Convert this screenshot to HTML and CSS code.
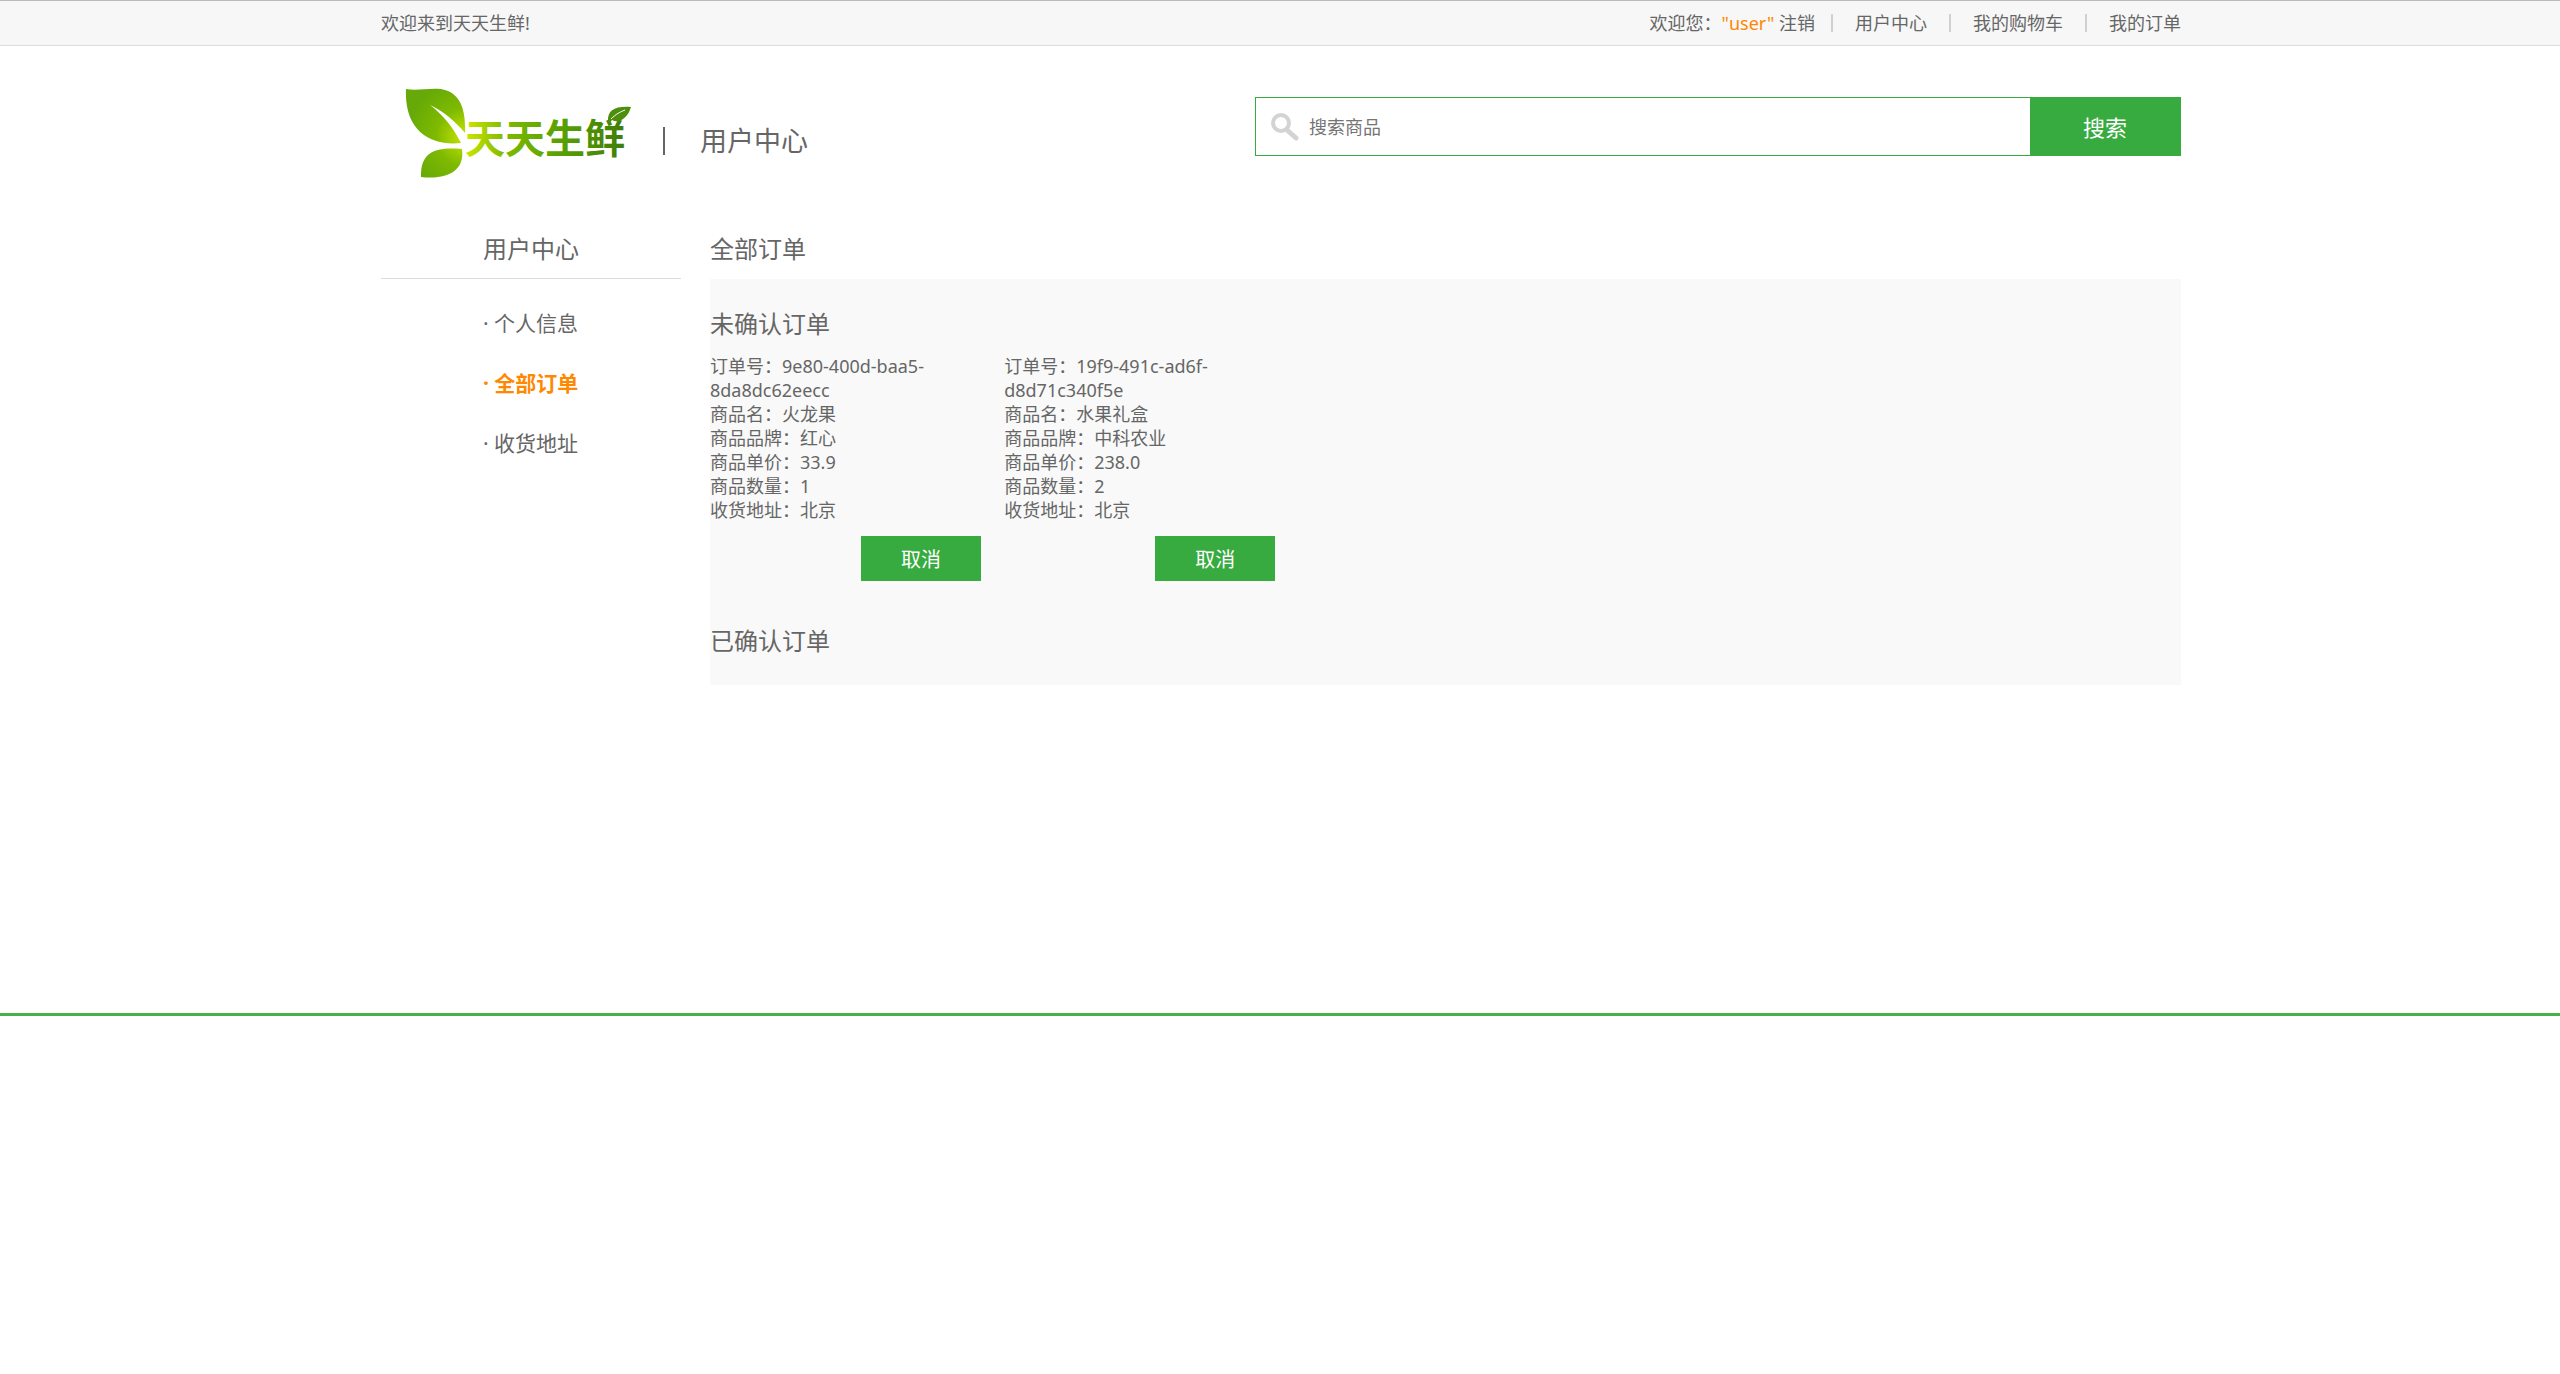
FILE: index.html
```html
<!DOCTYPE html>
<html lang="zh-CN">
<head>
<meta charset="utf-8">
<title>天天生鲜 - 用户中心</title>
<link rel="stylesheet" href="styles.css">
</head>
<body>
<div class="topbar">
  <div class="container topbar-inner">
    <div>欢迎来到天天生鲜!</div>
    <nav class="topnav">
      <div class="login">欢迎您：<em>"user"</em> <a href="#">注销</a></div>
      <a href="#">用户中心</a>
      <a href="#">我的购物车</a>
      <a href="#">我的订单</a>
    </nav>
  </div>
</div>

<header class="container header">
  <a class="logo" href="#" aria-label="天天生鲜">
    <svg width="230" height="93" viewBox="0 0 230 93">
      <defs>
        <radialGradient id="leaf" gradientUnits="userSpaceOnUse" cx="60" cy="50" r="58">
          <stop offset="0" stop-color="#c8e600"/>
          <stop offset="0.5" stop-color="#7fba00"/>
          <stop offset="1" stop-color="#66a908"/>
        </radialGradient>
        <linearGradient id="word" gradientUnits="userSpaceOnUse" x1="61" y1="0" x2="221" y2="0">
          <stop offset="0" stop-color="#cbe600"/>
          <stop offset="0.25" stop-color="#7db900"/>
          <stop offset="0.6" stop-color="#58a000"/>
          <stop offset="1" stop-color="#3f7d08"/>
        </linearGradient>
      </defs>
      <path fill="url(#leaf)" d="M1 2C12 4 22 1 36 2C53 5 61 18 60 46C50 34 38 24 25 18C38 28 48 40 56 56C28 59 -1 46 1 2Z"/>
      <path fill="url(#leaf)" d="M57 62C32 60 15 64 16 90C42 93 60 84 57 62Z"/>
      <text class="logo-text" x="60" y="66" fill="url(#word)">天天生鲜</text>
      <path fill="#4d8f0c" d="M203 35C202 23 210 19 226 20C223 31 214 37 207 33L204 37Z"/>
      <path fill="none" stroke="#fff" stroke-width="1" d="M206 32C211 27 215 25 220 23"/>
    </svg>
  </a>
  <div class="page-name">用户中心</div>
  <form class="search">
    <svg class="search-icon" width="30" height="30" viewBox="0 0 30 30" fill="none" stroke="#d3d3d3">
      <circle cx="12" cy="11" r="8" stroke-width="4"/>
      <path d="M18 18L27 26" stroke-width="5" stroke-linecap="round"/>
    </svg>
    <input class="search-input" type="text" placeholder="搜索商品" aria-label="搜索商品">
    <button class="search-button" type="button">搜索</button>
  </form>
</header>

<main class="container layout">
  <aside class="sidebar">
    <h3 class="title side-title">用户中心</h3>
    <ul class="menu">
      <li><a href="#">· 个人信息</a></li>
      <li><a class="active" href="#">· 全部订单</a></li>
      <li><a href="#">· 收货地址</a></li>
    </ul>
  </aside>
  <section class="content">
    <h3 class="title">全部订单</h3>
    <div class="panel">
      <h3 class="title">未确认订单</h3>
      <div class="orders">
        <article class="order">
          <p>订单号：9e80-400d-baa5-8da8dc62eecc</p>
          <p>商品名：火龙果</p>
          <p>商品品牌：红心</p>
          <p>商品单价：33.9</p>
          <p>商品数量：1</p>
          <p>收货地址：北京</p>
          <button class="cancel" type="button">取消</button>
        </article>
        <article class="order">
          <p>订单号：19f9-491c-ad6f-d8d71c340f5e</p>
          <p>商品名：水果礼盒</p>
          <p>商品品牌：中科农业</p>
          <p>商品单价：238.0</p>
          <p>商品数量：2</p>
          <p>收货地址：北京</p>
          <button class="cancel" type="button">取消</button>
        </article>
      </div>
      <h3 class="title">已确认订单</h3>
    </div>
  </section>
</main>
<footer class="footer"></footer>
</body>
</html>
```
FILE: styles.css
```css
* { box-sizing: border-box; }

body {
  margin: 0;
  background: #fff;
  color: #666;
  font: 18px/24px "Noto Sans", "Noto Sans CJK SC", sans-serif;
}

h3, p, ul { margin: 0; padding: 0; font-weight: 400; }
ul { list-style: none; }
em { font-style: normal; color: #ff8800; }
a { color: inherit; text-decoration: none; }
input, button { font-family: inherit; border: 0; border-radius: 0; }

.container { max-width: 1802px; margin: 0 auto; padding-left: 2px; }

.topbar {
  background: #f7f7f7;
  border-top: 1px solid #bbb;
  border-bottom: 1px solid #ddd;
}
.topbar-inner {
  display: flex;
  justify-content: space-between;
  align-items: center;
  height: 44px;
}
.topnav { display: flex; align-items: center; }
.topnav > a {
  display: flex;
  align-items: center;
}
.topnav > a::before {
  content: "";
  width: 2px;
  height: 18px;
  margin: 0 22px;
  background: #d0d0d0;
}
.login { margin-right: -6px; }

.header {
  display: flex;
  align-items: flex-start;
  padding-top: 41px;
  height: 173px;
}
.logo { display: block; margin-left: 24px; height: 93px; }
.logo-text { font-size: 40px; font-weight: 700; }
.page-name {
  margin: 40px 0 0 28px;
  padding-left: 35px;
  border-left: 2px solid #666;
  font-size: 27px;
  line-height: 28px;
}
.search {
  display: flex;
  align-items: center;
  width: 926px;
  height: 59px;
  margin: 10px 0 0 auto;
  border: 1px solid #37ab40;
}
.search-icon { margin: 0 10px 0 13px; flex: none; }
.search-input {
  flex: 1;
  min-width: 0;
  height: 100%;
  padding: 0;
  color: #666;
  font-size: 18px;
  outline: 0;
  background: transparent;
}
.search-input::placeholder { color: #757575; }
.search-button, .cancel { background: #37ab40; color: #fff; cursor: pointer; }
.search-button { width: 150px; height: 100%; padding: 0 0 2px; font-size: 22px; }

.layout {
  display: flex;
  gap: 29px;
  min-height: 794px;
  align-items: flex-start;
}
.title { font-size: 24px; line-height: 60px; }
.sidebar { width: 300px; flex: none; }
.side-title { text-align: center; border-bottom: 1px solid #ddd; line-height: 59px; }
.menu { padding: 14px 0 0 102px; }
.menu li { font-size: 21px; line-height: 60px; }
.menu .active { color: #ff8800; font-weight: 700; }
.content { flex: 1; min-width: 0; }
.panel { background: #f9f9f9; padding: 15px 0 14px; }
.orders { display: grid; grid-template-columns: repeat(5, 1fr); }
.order { padding-bottom: 30px; }
.cancel {
  display: block;
  width: 120px;
  height: 45px;
  margin: 14px 0 0 151px;
  font-size: 20px;
}

.footer { border-top: 3px solid #48b04a; }
```
